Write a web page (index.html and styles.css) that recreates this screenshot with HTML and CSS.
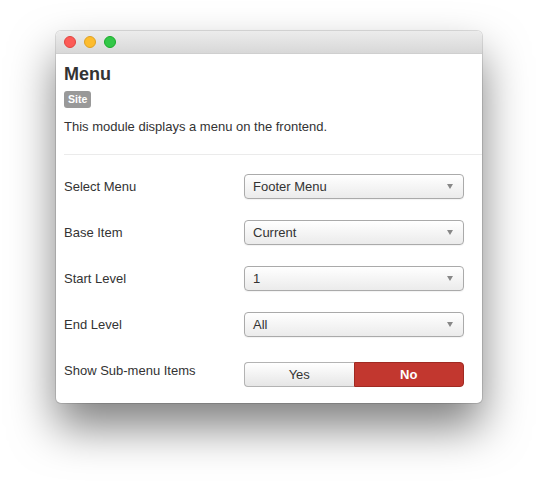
FILE: index.html
```html
<!DOCTYPE html>
<html>
<head>
<meta charset="utf-8">
<link rel="stylesheet" href="styles.css">
</head>
<body>
<div class="window">
  <div class="titlebar">
    <span class="light red"></span>
    <span class="light yellow"></span>
    <span class="light green"></span>
  </div>
  <div class="content">
    <h2 class="title">Menu</h2>
    <span class="badge">Site</span>
    <p class="desc">This module displays a menu on the frontend.</p>
  </div>
  <hr class="sep">
  <div class="form">
    <div class="row">
      <label class="label">Select Menu</label>
      <div class="select"><span>Footer Menu</span><i class="caret"></i></div>
    </div>
    <div class="row">
      <label class="label">Base Item</label>
      <div class="select"><span>Current</span><i class="caret"></i></div>
    </div>
    <div class="row">
      <label class="label">Start Level</label>
      <div class="select"><span>1</span><i class="caret"></i></div>
    </div>
    <div class="row">
      <label class="label">End Level</label>
      <div class="select"><span>All</span><i class="caret"></i></div>
    </div>
    <div class="row row-toggle">
      <label class="label label-top">Show Sub-menu Items</label>
      <div class="toggle">
        <span class="btn yes">Yes</span>
        <span class="btn no">No</span>
      </div>
    </div>
  </div>
</div>
</body>
</html>
```
FILE: styles.css
```css
html, body {
  margin: 0;
  padding: 0;
  background: #fff;
}
body {
  font-family: "Liberation Sans", Arial, sans-serif;
  font-size: 13px;
  color: #333;
  padding-top: 31px;
  min-height: 484px;
  box-sizing: border-box;
}
.window {
  margin-left: 56px;
  width: 426px;
  height: 372px;
  background: #fff;
  border-radius: 5px;
  overflow: hidden;
  box-shadow: 0 24px 45px rgba(0, 0, 0, 0.5), 0 0 0 1px rgba(0, 0, 0, 0.12);
  box-sizing: border-box;
}
.titlebar {
  height: 23px;
  background: linear-gradient(#ececec, #d8d8d8);
  border-bottom: 1px solid #cfcfcf;
  box-sizing: border-box;
  display: flex;
  align-items: center;
  padding-left: 8px;
  gap: 8px;
}
.light {
  width: 12px;
  height: 12px;
  border-radius: 50%;
  display: block;
  box-sizing: border-box;
}
.red { background: #fc5b57; border: 0.5px solid #e0443e; }
.yellow { background: #fdbc2e; border: 0.5px solid #dea123; }
.green { background: #33c748; border: 0.5px solid #1aab29; }
.content {
  padding: 9px 8px 0 8px;
}
.title {
  margin: 0;
  font-size: 18px;
  line-height: 22px;
  font-weight: bold;
  color: #333;
}
.badge {
  display: inline-block;
  margin-top: 6px;
  background: #999;
  color: #fff;
  font-weight: bold;
  font-size: 10.5px;
  line-height: 17px;
  height: 17px;
  padding: 0 4px;
  border-radius: 3px;
}
.desc {
  margin: 10px 0 0 0;
  line-height: 18px;
}
.sep {
  margin: 18px 0 0 8px;
  border: 0;
  border-top: 1px solid #ebebeb;
  height: 0;
}
.form {
  padding: 19px 18px 0 8px;
  display: flex;
  flex-direction: column;
  gap: 21px;
}
.row {
  display: flex;
  align-items: center;
  height: 25px;
}
.row-toggle {
  margin-top: 4px;
}
.label {
  width: 180px;
  line-height: 18px;
}
.label-top {
  align-self: flex-start;
}
.select {
  width: 220px;
  height: 25px;
  box-sizing: border-box;
  border: 1px solid #aaa;
  border-radius: 4px;
  background: linear-gradient(#ffffff, #ebebeb);
  box-shadow: 0 1px 1px rgba(0,0,0,0.05);
  display: flex;
  align-items: center;
  justify-content: space-between;
  padding: 0 10px 0 8px;
  color: #333;
}
.caret {
  width: 0;
  height: 0;
  border-left: 3.5px solid transparent;
  border-right: 3.5px solid transparent;
  border-top: 5px solid #888;
}
.toggle {
  width: 220px;
  height: 25px;
  display: flex;
}
.btn {
  flex: 1;
  display: flex;
  align-items: center;
  justify-content: center;
  box-sizing: border-box;
}
.yes {
  border: 1px solid #b3b3b3;
  border-right: 0;
  border-radius: 4px 0 0 4px;
  background: linear-gradient(#ffffff, #e6e6e6);
  color: #333;
}
.no {
  border: 1px solid #a02a22;
  border-radius: 0 4px 4px 0;
  background: #c2372f;
  color: #fff;
  font-weight: bold;
}
```
